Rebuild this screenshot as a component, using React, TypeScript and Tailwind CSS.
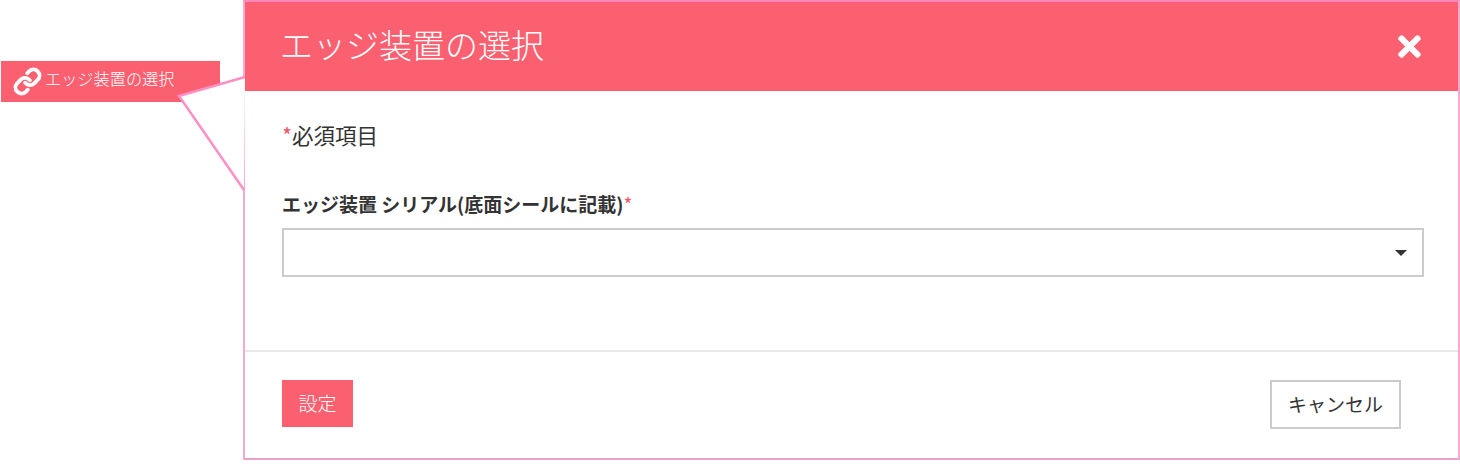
import { Link } from "lucide-react";
import { FaTimes } from "react-icons/fa";

const font = { fontFamily: '"Noto Sans CJK JP", "Liberation Sans", sans-serif' };

const App = () => {
  return (
    <div
      className="relative flex h-[466px] w-[1460px] overflow-hidden bg-white text-[#333]"
      style={font}
    >
      {/* menu item the callout points from */}
      <div className="w-[243px] shrink-0 pt-[61px] pl-px">
        <div className="flex h-[41px] w-[219px] items-center bg-[#fb6070] pl-[12px] text-white">
          <Link size={29} strokeWidth={3.2} className="shrink-0" />
          <span className="mb-[6px] ml-[3px] text-[16.2px] font-light leading-none">エッジ装置の選択</span>
        </div>
      </div>

      {/* modal */}
      <div className="flex h-[460px] w-[1217px] flex-col border-2 border-[#f3a9d0] border-t-[#ff86bb] border-b-[#e8a3c9]">
        <div className="flex h-[89px] shrink-0 items-center justify-between bg-[#fb6070] pl-[35px] pr-[32px] text-white">
          <h1 className="mb-[4px] text-[33px] font-light leading-none">エッジ装置の選択</h1>
          <FaTimes className="text-[33px]" />
        </div>

        <div className="flex flex-1 flex-col pl-[37px] pr-[34px]">
          <p className="mt-[32px] text-[21.5px] leading-[24px]">
            <span className="text-[#f0556a]">*</span>必須項目
          </p>
          <label className="mt-[45px] text-[19px] font-bold leading-[24px]">
            エッジ装置 シリアル(底面シールに記載)<span className="font-normal text-[#f0556a]">*</span>
          </label>
          <div className="mt-[12px] flex h-[49px] items-center justify-end border-2 border-[#ccc] pr-[15px]">
            <div className="h-0 w-0 border-x-[6px] border-t-[6px] border-x-transparent border-t-[#333]" />
          </div>
        </div>

        <div className="flex h-[108px] shrink-0 items-start justify-between border-t-2 border-[#e8e8e8] pl-[37px] pr-[57px] pt-[28px]">
          <button className="h-[47px] w-[71px] bg-[#fb6070] pb-[3px] text-[19px] font-light leading-none text-white">
            設定
          </button>
          <button className="h-[49px] w-[131px] border-2 border-[#ccc] bg-white pb-[2px] text-[19px] leading-none text-[#333]">
            キャンセル
          </button>
        </div>
      </div>

      {/* callout lines, white inside so the item's corner is hidden */}
      <svg className="absolute left-0 top-0" width="260" height="200" fill="none">
        <polygon points="245,78 179,96 244,190" fill="white" />
        <polyline points="245,77 179,96 244,190" stroke="#ff8fc4" strokeWidth="2.5" />
      </svg>
    </div>
  );
};

export default App;
